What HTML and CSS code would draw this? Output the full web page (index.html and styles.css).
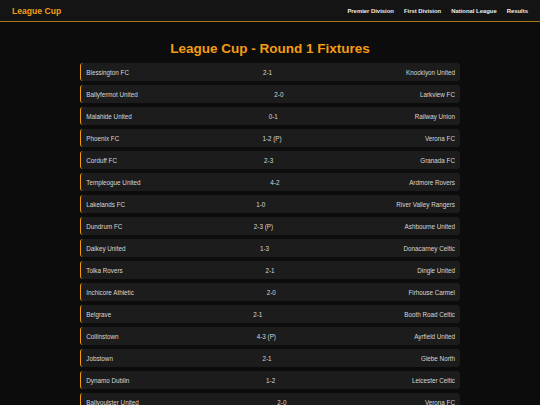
FILE: index.html
```html
<!DOCTYPE html>
<html lang="en">
<head>
    <meta charset="UTF-8">
    <meta name="viewport" content="width=device-width, initial-scale=1.0">
    <title>League Cup - Round 1 Fixtures</title>
    <link rel="stylesheet" href="styles.css">
</head>
<body>
    <header class="topbar">
        <div class="brand">League Cup</div>
        <nav class="nav">
            <a href="#">Premier Division</a>
            <a href="#">First Division</a>
            <a href="#">National League</a>
            <a href="#">Results</a>
        </nav>
    </header>

    <main class="content">
        <h1 class="title">League Cup - Round 1 Fixtures</h1>

        <div class="fixture"><span>Blessington FC</span><span>2-1</span><span>Knocklyon United</span></div>
        <div class="fixture"><span>Ballyfermot United</span><span>2-0</span><span>Larkview FC</span></div>
        <div class="fixture"><span>Malahide United</span><span>0-1</span><span>Railway Union</span></div>
        <div class="fixture"><span>Phoenix FC</span><span>1-2 (P)</span><span>Verona FC</span></div>
        <div class="fixture"><span>Corduff FC</span><span>2-3</span><span>Granada FC</span></div>
        <div class="fixture"><span>Templeogue United</span><span>4-2</span><span>Ardmore Rovers</span></div>
        <div class="fixture"><span>Lakelands FC</span><span>1-0</span><span>River Valley Rangers</span></div>
        <div class="fixture"><span>Dundrum FC</span><span>2-3 (P)</span><span>Ashbourne United</span></div>
        <div class="fixture"><span>Dalkey United</span><span>1-3</span><span>Donacarney Celtic</span></div>
        <div class="fixture"><span>Tolka Rovers</span><span>2-1</span><span>Dingle United</span></div>
        <div class="fixture"><span>Inchicore Athletic</span><span>2-0</span><span>Firhouse Carmel</span></div>
        <div class="fixture"><span>Belgrave</span><span>2-1</span><span>Booth Road Celtic</span></div>
        <div class="fixture"><span>Collinstown</span><span>4-3 (P)</span><span>Ayrfield United</span></div>
        <div class="fixture"><span>Jobstown</span><span>2-1</span><span>Glebe North</span></div>
        <div class="fixture"><span>Dynamo Dublin</span><span>1-2</span><span>Leicester Celtic</span></div>
        <div class="fixture"><span>Ballyoulster United</span><span>2-0</span><span>Verona FC</span></div>
        <div class="fixture"><span>Kilbarrack United</span><span>3-1</span><span>Sacred Heart</span></div>
    </main>
</body>
</html>
```

FILE: styles.css
```css
body {
    font-family: "Liberation Sans", Arial, sans-serif;
    background-color: #0c0c0c;
    color: #d8d8d8;
    margin: 0;
}
.topbar {
    display: flex;
    justify-content: space-between;
    align-items: center;
    height: 21px;
    padding: 0 12px;
    background: #141414;
    border-bottom: 1px solid #a8761f;
}
.brand {
    font-size: 8.6px;
    font-weight: bold;
    color: #f39c12;
}
.nav {
    display: flex;
    gap: 10px;
}
.nav a {
    font-size: 5.9px;
    font-weight: bold;
    color: #eeeeee;
    text-decoration: none;
}
.content {
    width: 380px;
    margin: 0 auto;
    padding-top: 19px;
}
.title {
    font-size: 13.5px;
    color: #f39c12;
    text-align: center;
    margin: 0 0 7px;
}
.fixture {
    display: flex;
    justify-content: space-between;
    align-items: center;
    height: 18px;
    box-sizing: border-box;
    padding: 0 5px 0 5.3px;
    margin-bottom: 4px;
    background: #1c1c1c;
    border-left: 1.6px solid #f39c12;
    border-radius: 3px;
    font-size: 6.3px;
    color: #d8d8d8;
}
```
